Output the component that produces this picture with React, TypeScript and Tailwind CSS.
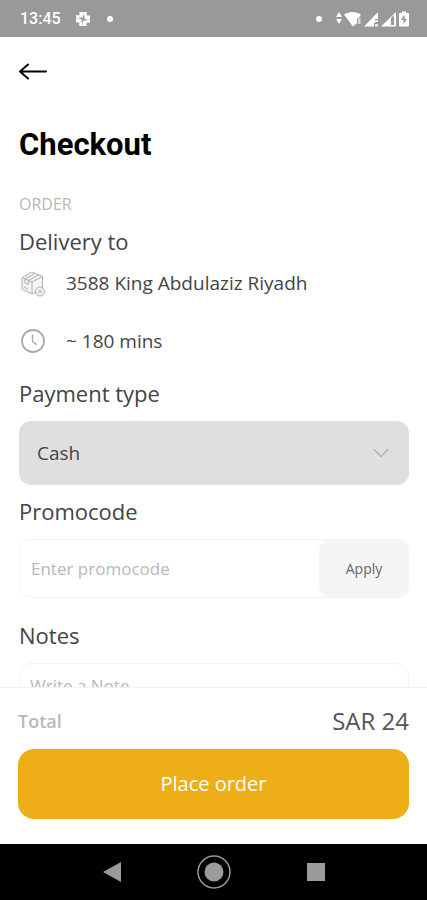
import React from "react";

const StatusBar = () => {
  return (
    <div className="flex h-[37px] shrink-0 items-center justify-between bg-[#999999] pl-5 pr-[18px] text-white">
      <div className="flex items-center">
        <span className="font-['Roboto',sans-serif] text-base font-medium">13:45</span>
        <svg className="ml-3.5 h-4 w-4" viewBox="0 0 16 16" fill="none" stroke="currentColor" strokeWidth="3.4">
          <path d="M6.200 1v5.500M1 6h3.500M15 6.200H9.500M10 1v3.500M9.800 15V9.500M15 10h-3.500M1 9.800h5.500M6 15v-3.500" />
        </svg>
        <span className="ml-4 h-1.5 w-1.5 rounded-full bg-white" />
      </div>
      <div className="flex items-center">
        <span className="mr-3.5 h-1.5 w-1.5 rounded-full bg-white" />
        <svg className="h-4 w-[73px]" viewBox="0 0 73 16" fill="currentColor">
          <path d="M3 1l3 5H0zM3 13l3-5H0z" />
          <path d="M8 3.500C12.500 0 20 0 25 3.500L22 7.500h-1V12l-4 3.500z" />
          <path d="M22 7h2.500v6H22z" opacity=".6" />
          <path d="M42 1v7h-3v4h-1v3.500H28z" />
          <path d="M39 9h3v2h-3zM39 13h3v2.500h-3z" opacity=".8" />
          <path fillRule="evenodd" d="M60 1v14.500H45zM55 7v7h3V4z" />
          <path fillRule="evenodd" d="M66 .5h4V2h2a1 1 0 0 1 1 1v11.500a1 1 0 0 1-1 1h-8a1 1 0 0 1-1-1V3a1 1 0 0 1 1-1h2zM68 4l-3 5h2.500v4L71 8h-2z" />
        </svg>
      </div>
    </div>
  );
};

const PackageIcon = () => {
  return (
    <svg className="h-7 w-6" viewBox="0 0 24 28" fill="none" stroke="#b0b0b0" strokeLinejoin="round">
      <path d="M1 8.500L11 3l10.500 4.500v12L11 25 1 20z" fill="#f4f4f4" />
      <path d="M1 8.500l10 4.500 10.500-5.500M11 13v12M4 10l10-5.500M7.500 11.500l10-5.500M4 10v4l3.500 1.500v-4M3 18l4 2" />
      <circle cx="19" cy="22.500" r="4.500" fill="#eeeeee" />
      <path d="M17.500 21l3 3M20.500 21l-3 3" />
    </svg>
  );
};

const ClockIcon = () => {
  return (
    <svg className="h-6 w-6" viewBox="0 0 24 24" fill="none" stroke="#aaaaaa" strokeLinecap="round">
      <circle cx="12" cy="12" r="11" strokeWidth="1.8" />
      <path d="M11.500 6v6.500l4 3" strokeWidth="1.4" />
    </svg>
  );
};

const NavBar = () => {
  return (
    <nav className="flex h-14 shrink-0 items-center justify-center gap-[76px] bg-black text-[#9b9b9b]">
      <button type="button" aria-label="Back">
        <svg className="h-5 w-[18px]" viewBox="0 0 18 20" fill="currentColor">
          <path d="M0 10L18 0v20z" />
        </svg>
      </button>
      <button type="button" aria-label="Home">
        <svg className="h-[34px] w-[34px]" viewBox="0 0 34 34" fill="none" stroke="currentColor">
          <circle cx="17" cy="17" r="16" strokeWidth="1.5" />
          <circle cx="17" cy="17" r="9.500" fill="currentColor" stroke="none" />
        </svg>
      </button>
      <button type="button" aria-label="Recent apps">
        <svg className="h-[18px] w-[18px]" viewBox="0 0 18 18" fill="currentColor">
          <rect width="18" height="18" />
        </svg>
      </button>
    </nav>
  );
};

const App = () => {
  return (
    <div className="flex h-dvh flex-col bg-white font-['Open_Sans',sans-serif] text-[#444444]">
      <StatusBar />

      <main className="min-h-0 flex-1 overflow-y-auto pt-[23px] pr-[18px] pl-[19px] [scrollbar-width:none]">
        <button type="button" aria-label="Go back" className="block">
          <svg className="h-6 w-7" viewBox="0 0 28 24" fill="none" stroke="#000000" strokeWidth="2" strokeLinecap="round" strokeLinejoin="round">
            <path d="M27 11.500H1M9 4.500l-8 7 8 7" />
          </svg>
        </button>
        <h1 className="mt-[41px] font-['Roboto',sans-serif] text-[31px] leading-10 font-bold text-black">Checkout</h1>

        {/* Order info */}
        <p className="mt-[29px] text-base leading-5 text-[#b8b8b8]">ORDER</p>
        <h2 className="mt-[11px] text-[22px] leading-8 font-medium">Delivery to</h2>
        <div className="mt-3 flex items-center gap-[21px] pl-0.5 text-[19px] leading-6">
          <PackageIcon />
          <span>3588 King Abdulaziz Riyadh</span>
        </div>
        <div className="mt-8 flex items-center gap-[21px] pl-0.5 text-[19px] leading-6">
          <ClockIcon />
          <span>~ 180 mins</span>
        </div>

        {/* Payment */}
        <h2 className="mt-6 text-[22px] leading-8 font-medium">
          <label htmlFor="payment">Payment type</label>
        </h2>
        <div className="mt-3 grid items-center">
          <select
            id="payment"
            className="col-start-1 row-start-1 h-16 w-full appearance-none rounded-xl bg-[#dfdfdf] px-[18px] text-[19px]"
          >
            <option>Cash</option>
          </select>
          <svg className="pointer-events-none col-start-1 row-start-1 mr-5 h-4 w-4 justify-self-end" viewBox="0 0 16 16" fill="none" stroke="#b4b4b4" strokeWidth="1.5" strokeLinecap="round" strokeLinejoin="round">
            <path d="M1 4.500l7 7 7-7" />
          </svg>
        </div>

        {/* Promocode */}
        <h2 className="mt-2.5 text-[22px] leading-8 font-medium">
          <label htmlFor="promocode">Promocode</label>
        </h2>
        <div className="mt-3 flex h-[59px] rounded-xl border border-[#f3f3f3]">
          <input
            id="promocode"
            type="text"
            placeholder="Enter promocode"
            className="min-w-0 flex-1 bg-transparent px-[11px] text-[17px] outline-none placeholder:text-[#b8b8b8]"
          />
          <button type="button" className="-m-px w-[90px] rounded-xl bg-[#f5f5f5] text-sm text-[#666666]">
            Apply
          </button>
        </div>

        {/* Notes */}
        <h2 className="mt-[21px] text-[22px] leading-8 font-medium">
          <label htmlFor="notes">Notes</label>
        </h2>
        <textarea
          id="notes"
          placeholder="Write a Note"
          className="mt-3 block h-32 w-full resize-none rounded-xl border border-[#f3f3f3] px-2.5 py-2.5 text-[17px] leading-6 outline-none placeholder:text-[#b8b8b8]"
        />
      </main>

      <footer className="shrink-0 border-t border-[#f0f0f0] px-[18px] pt-[17px] pb-[25px]">
        <div className="flex items-center justify-between leading-8">
          <span className="text-lg font-semibold text-[#b8b8b8]">Total</span>
          <span className="text-2xl leading-8 text-[#555555]">SAR 24</span>
        </div>
        <button type="button" className="mt-3 h-[70px] w-full rounded-2xl bg-[#eeae17] text-xl text-white">
          Place order
        </button>
      </footer>

      <NavBar />
    </div>
  );
};

export default App;
